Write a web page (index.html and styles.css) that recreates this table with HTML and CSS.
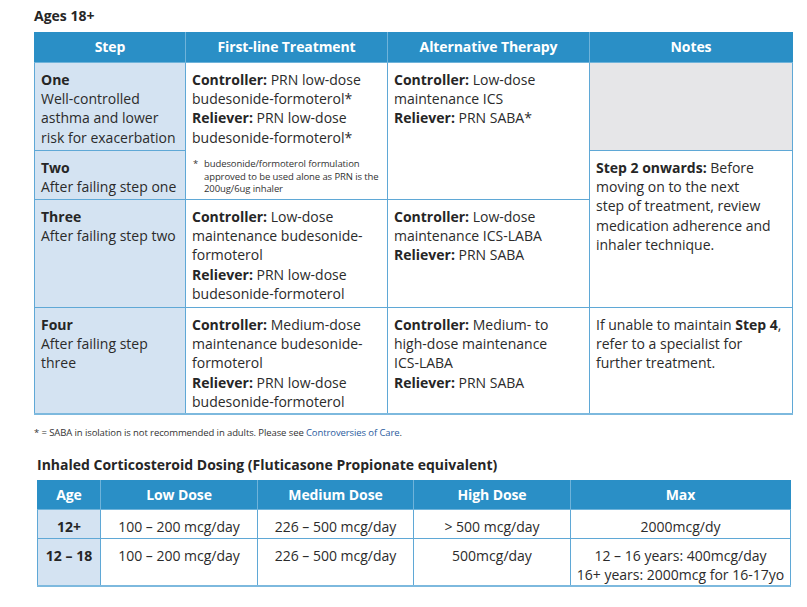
FILE: index.html
```html
<!DOCTYPE html>
<html lang="en">
<head>
<meta charset="utf-8">
<title>Asthma treatment</title>
<link rel="stylesheet" href="styles.css">
</head>
<body>
<div class="page">
  <h3 class="title">Ages 18+</h3>
  <table class="steps">
    <colgroup>
      <col class="c1"><col class="c2"><col class="c3"><col class="c4">
    </colgroup>
    <thead>
      <tr><th>Step</th><th>First-line Treatment</th><th>Alternative Therapy</th><th>Notes</th></tr>
    </thead>
    <tbody>
      <tr class="r1">
        <td class="step"><b>One</b><br>Well-controlled asthma and lower risk for exacerbation</td>
        <td rowspan="2" class="first"><b>Controller:</b> PRN low-dose budesonide-formoterol*<br><b>Reliever:</b> PRN low-dose budesonide-formoterol*
          <div class="cellnote"><span class="ast">*</span><span>budesonide/formoterol formulation approved to be used alone as PRN is the 200ug/6ug inhaler</span></div>
        </td>
        <td rowspan="2" class="alt"><b>Controller:</b> Low-dose maintenance ICS<br><b>Reliever:</b> PRN SABA*</td>
        <td class="empty"></td>
      </tr>
      <tr class="r2">
        <td class="step"><b>Two</b><br>After failing step one</td>
        <td rowspan="2" class="notes"><b>Step 2 onwards:</b> Before moving on to the next<br>step of treatment, review medication adherence and inhaler technique.</td>
      </tr>
      <tr class="r3">
        <td class="step"><b>Three</b><br>After failing step two</td>
        <td class="first"><b>Controller:</b> Low-dose maintenance budesonide-formoterol<br><b>Reliever:</b> PRN low-dose budesonide-formoterol</td>
        <td class="alt"><b>Controller:</b> Low-dose maintenance ICS-LABA<br><b>Reliever:</b> PRN SABA</td>
      </tr>
      <tr class="r4">
        <td class="step"><b>Four</b><br>After failing step three</td>
        <td class="first"><b>Controller:</b> Medium-dose maintenance budesonide-formoterol<br><b>Reliever:</b> PRN low-dose budesonide-formoterol</td>
        <td class="alt"><b>Controller:</b> Medium- to high-dose maintenance ICS-LABA<br><b>Reliever:</b> PRN SABA</td>
        <td class="notes">If unable to maintain <b>Step 4</b>, refer to a specialist for further treatment.</td>
      </tr>
    </tbody>
  </table>
  <p class="foot">* = SABA in isolation is not recommended in adults. Please see <a href="#">Controversies of Care</a>.</p>

  <h3 class="title2">Inhaled Corticosteroid Dosing (Fluticasone Propionate equivalent)</h3>
  <table class="dose">
    <colgroup>
      <col class="d1"><col class="d2"><col class="d3"><col class="d4"><col class="d5">
    </colgroup>
    <thead>
      <tr><th>Age</th><th>Low Dose</th><th>Medium Dose</th><th>High Dose</th><th>Max</th></tr>
    </thead>
    <tbody>
      <tr class="dr1">
        <td class="age">12+</td><td>100 – 200 mcg/day</td><td>226 – 500 mcg/day</td><td>&gt; 500 mcg/day</td><td>2000mcg/dy</td>
      </tr>
      <tr class="dr2">
        <td class="age">12 – 18</td><td>100 – 200 mcg/day</td><td>226 – 500 mcg/day</td><td>500mcg/day</td><td>12 – 16 years: 400mcg/day<br>16+ years: 2000mcg for 16-17yo</td>
      </tr>
    </tbody>
  </table>
</div>
</body>
</html>
```

FILE: styles.css
```css
* { box-sizing: border-box; }
html, body { margin: 0; padding: 0; background: #ffffff; }
body {
  font-family: "Open Sans", "Noto Sans", "Liberation Sans", sans-serif;
  color: #2b2b2b;
}
.page { padding: 6px 0 0 34px; width: 807px; }
.title {
  margin: 0 0 7px 0;
  font-size: 14px;
  font-weight: 700;
  line-height: 19px;
  color: #262626;
}
table { border-collapse: collapse; table-layout: fixed; }
.steps { width: 758px; }
.c1 { width: 151px; }
.c2 { width: 202px; }
.c3 { width: 202px; }
.c4 { width: 203px; }
th {
  background: #2a8fc6;
  color: #ffffff;
  font-weight: 700;
  font-size: 14px;
  text-align: center;
  border: 1px solid #6fb3da;
  border-top: 0;
  height: 30px;
  padding: 0 6px;
  letter-spacing: -0.1px;
}
th:first-child { border-left: 1px solid #2a8fc6; }
th:last-child { border-right: 1px solid #2a8fc6; }
.steps td {
  border: 1px solid #5fa8d6;
  vertical-align: top;
  font-size: 14px;
  line-height: 19.4px;
  padding: 7px 8px 1px 6px;
  color: #2b2b2b;
}
.steps td.step { padding-right: 4px; background: #d4e3f2; }
.steps td.first { padding-right: 6px; }
.steps td.alt { padding-right: 16px; }
.steps td b { font-weight: 700; color: #262626; }
.steps td.empty { background: #e6e6e8; }
.steps tr.r1 { height: 88px; }
.steps tr.r2 { height: 49px; }
.steps tr.r3 { height: 108px; }
.steps tr.r4 { height: 107px; }
.steps tbody tr:last-child td { border-bottom: 2px solid #7db9de; }
.cellnote {
  display: flex;
  margin-top: 11px;
  font-size: 9.5px;
  line-height: 12.4px;
  letter-spacing: -0.1px;
  color: #333;
}
.cellnote .ast { width: 12px; flex: none; padding-left: 1px; }
.foot {
  margin: 11px 0 0 0;
  font-size: 9.5px;
  line-height: 14px;
  letter-spacing: -0.1px;
  color: #333;
}
.foot a { color: #2b5c9e; text-decoration: none; }
.title2 {
  margin: 15px 0 6px 3px;
  font-size: 14px;
  font-weight: 700;
  line-height: 19px;
  letter-spacing: 0;
  color: #262626;
}
.dose { width: 753px; margin-left: 3px; }
.d1 { width: 63px; }
.d2 { width: 157px; }
.d3 { width: 156px; }
.d4 { width: 157px; }
.d5 { width: 220px; }
.dose th { height: 29px; }
.dose td {
  border: 1px solid #5fa8d6;
  text-align: center;
  vertical-align: top;
  font-size: 14px;
  line-height: 19.2px;
  padding: 7px 4px 0 4px;
  color: #2b2b2b;
}
.dose tr.dr1 { height: 29px; }
.dose tr.dr2 { height: 48px; }
.dose td.age { background: #d4e3f2; font-weight: 700; color: #262626; }
.dose tbody tr:last-child td { border-bottom: 2px solid #7db9de; }
```
